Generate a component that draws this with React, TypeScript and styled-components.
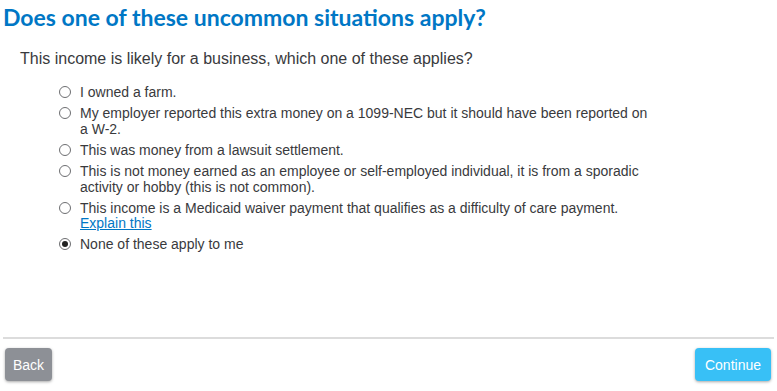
import { FC, useState } from "react";
import styled, { createGlobalStyle } from "styled-components";

const GlobalStyle = createGlobalStyle`
  html, body {
    margin: 0;
    padding: 0;
    background: #fff;
  }
  body {
    font-family: "Liberation Sans", Arial, sans-serif;
    color: #393a3d;
  }
`;

const Page = styled.div`
  width: 777px;
  height: 391px;
  display: flex;
  flex-direction: column;
  box-sizing: border-box;
`;

const Content = styled.div`
  height: 336px;
  box-sizing: border-box;
  padding: 4px 0 0 3px;
`;

const Heading = styled.h1`
  margin: 0;
  font-family: Lato, "Noto Sans", sans-serif;
  font-weight: 700;
  font-size: 23px;
  line-height: 26px;
  color: #0077c5;
`;

const Question = styled.p`
  margin: 19px 0 0 17px;
  font-size: 16px;
  line-height: 20px;
`;

const OptionList = styled.div`
  margin: 15px 0 0 56px;
  display: flex;
  flex-direction: column;
  gap: 5px;
  width: 590px;
`;

const OptionRow = styled.label`
  display: flex;
  align-items: flex-start;
  gap: 9px;
  font-size: 14px;
  line-height: 16px;
  cursor: pointer;
`;

const Radio = styled.span<{ $checked: boolean }>`
  flex: none;
  width: 12px;
  height: 12px;
  margin-top: 2px;
  border: 1px solid #6d6e71;
  border-radius: 50%;
  box-sizing: border-box;
  display: flex;
  align-items: center;
  justify-content: center;
  background: #fff;

  &::after {
    content: "";
    width: 6px;
    height: 6px;
    border-radius: 50%;
    background: #222;
    display: ${(p) => (p.$checked ? "block" : "none")};
  }
`;

const OptionText = styled.span`
  display: flex;
  flex-direction: column;
`;

const Link = styled.a`
  color: #0077c5;
  text-decoration: underline;
  line-height: 15px;
`;

const Divider = styled.hr`
  margin: 1px 3px 0;
  border: none;
  height: 2px;
  background: #dcdcdc;
`;

const Footer = styled.div`
  display: flex;
  justify-content: space-between;
  padding: 9px 6px 0 5px;
`;

const Button = styled.button<{ $primary?: boolean }>`
  height: 33px;
  padding: ${(p) => (p.$primary ? "0 10px" : "0 8px")};
  border: none;
  border-radius: 4px;
  font-family: "Liberation Sans", Arial, sans-serif;
  font-size: 14px;
  color: #fff;
  background: ${(p) => (p.$primary ? "#38c0f6" : "#8d9096")};
  box-shadow: 0 1px 3px rgba(0, 0, 0, 0.35);
  cursor: pointer;
`;

const options = [
  "I owned a farm.",
  "My employer reported this extra money on a 1099-NEC but it should have been reported on a W-2.",
  "This was money from a lawsuit settlement.",
  "This is not money earned as an employee or self-employed individual, it is from a sporadic activity or hobby (this is not common).",
  "This income is a Medicaid waiver payment that qualifies as a difficulty of care payment.",
  "None of these apply to me",
];

const App: FC = () => {
  const [selected, setSelected] = useState(5);

  return (
    <>
      <GlobalStyle />
      <Page>
        <Content>
          <Heading>Does one of these uncommon situations apply?</Heading>
          <Question>This income is likely for a business, which one of these applies?</Question>
          <OptionList>
            {options.map((text, index) => (
              <OptionRow key={index} onClick={() => setSelected(index)}>
                <Radio $checked={selected === index} />
                <OptionText>
                  <span>{text}</span>
                  {index === 4 && <Link href="#">Explain this</Link>}
                </OptionText>
              </OptionRow>
            ))}
          </OptionList>
        </Content>
        <Divider />
        <Footer>
          <Button>Back</Button>
          <Button $primary>Continue</Button>
        </Footer>
      </Page>
    </>
  );
};

export default App;
